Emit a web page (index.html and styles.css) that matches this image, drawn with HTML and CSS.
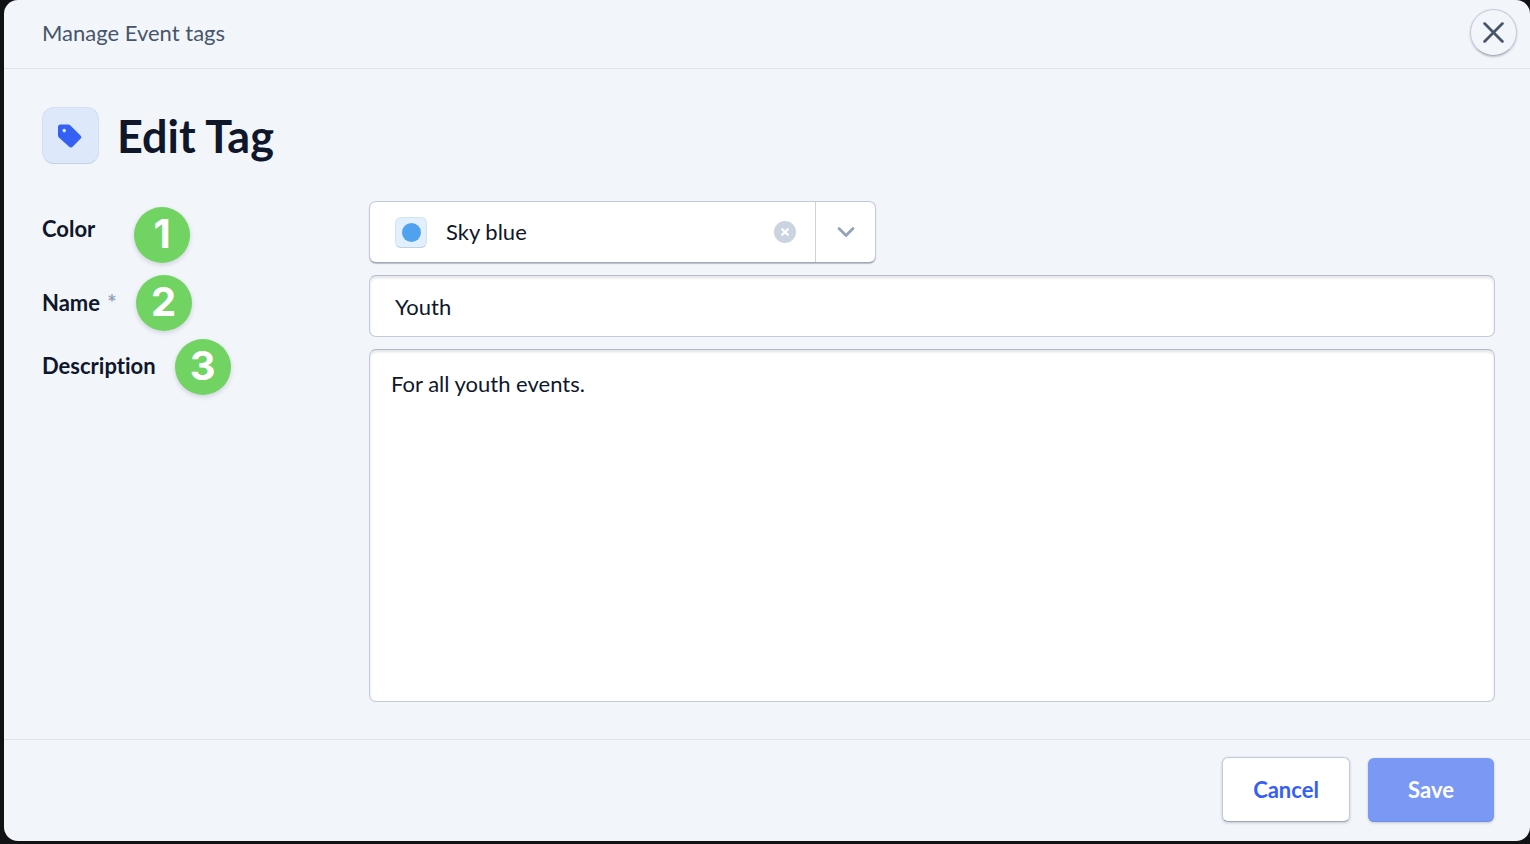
FILE: index.html
```html
<!DOCTYPE html>
<html lang="en">
<head>
    <meta charset="UTF-8">
    <meta name="viewport" content="width=device-width, initial-scale=1">
    <title>Edit Tag</title>
    <link rel="stylesheet" href="styles.css">
</head>
<body>
    <form class="modal">
        <header class="modal-header">
            <span class="modal-name">Manage Event tags</span>
            <button type="button" class="close" aria-label="Close">
                <svg width="21" height="21" viewBox="0 0 20 20" fill="none" stroke="#475569" stroke-width="2.6" stroke-linecap="round">
                    <path d="M1.5 1.5l17 17M18.5 1.5l-17 17"/>
                </svg>
            </button>
        </header>

        <main class="modal-body">
            <div class="title">
                <span class="title-icon">
                    <svg width="24" height="24" viewBox="0 0 24 24">
                        <path fill="#3560f4" fill-rule="evenodd" d="M2.500 .5h7.700c.8 0 1.600.3 2.200.9L22.200 11.200a2.600 2.600 0 0 1 0 3.900L14.900 22.600a2.800 2.800 0 0 1-4 0L.9 13.500A2.900 2.900 0 0 1 0 11.300V3A2.500 2.500 0 0 1 2.500 .5zM6.200 4.800a1.800 1.800 0 1 0 0 3.600 1.800 1.800 0 0 0 0-3.600z"/>
                    </svg>
                </span>
                <h1>Edit Tag</h1>
            </div>

            <div class="row">
                <div class="label-cell step-low">
                    <label for="color">Color</label>
                    <span class="step">1</span>
                </div>
                <div class="select-box">
                    <span class="swatch"></span>
                    <select id="color">
                        <option>Sky blue</option>
                    </select>
                    <button type="button" class="clear" aria-label="Clear color">
                        <svg width="22" height="22" viewBox="0 0 22 22">
                            <circle cx="11" cy="11" r="11" fill="#cbd3e0"/>
                            <path d="M8.200 8.200l5.600 5.600M13.800 8.200l-5.600 5.600" stroke="#fff" stroke-width="2.200" stroke-linecap="round"/>
                        </svg>
                    </button>
                    <button type="button" class="toggle" aria-label="Show colors">
                        <svg width="18" height="12" viewBox="0 0 18 12" fill="none" stroke="#94a3b8" stroke-width="2.800" stroke-linecap="round" stroke-linejoin="round">
                            <path d="M2 2.500l7 7 7-7"/>
                        </svg>
                    </button>
                </div>
            </div>

            <div class="row">
                <div class="label-cell">
                    <label for="name">Name <span class="required">*</span></label>
                    <span class="step">2</span>
                </div>
                <input type="text" id="name" class="field" value="Youth">
            </div>

            <div class="row row-grow">
                <div class="label-cell label-short">
                    <label for="description">Description</label>
                    <span class="step">3</span>
                </div>
                <textarea id="description" class="field">For all youth events.</textarea>
            </div>
        </main>

        <footer class="modal-footer">
            <button type="button" class="btn btn-cancel">Cancel</button>
            <button type="submit" class="btn btn-save">Save</button>
        </footer>
    </form>
</body>
</html>
```
FILE: styles.css
```css
* {
    box-sizing: border-box;
}

body {
    margin: 0;
    background: #111214;
    color: #0f172a;
    font-family: Lato, "Liberation Sans", sans-serif;
    font-size: 22px;
    line-height: 28px;
    font-variant-ligatures: none;
}

button, input, select, textarea {
    font: inherit;
    color: inherit;
}

button {
    padding: 0;
    border: 0;
    background: none;
    cursor: pointer;
}

svg {
    display: block;
}

.modal {
    display: flex;
    flex-direction: column;
    min-height: calc(100vh - 3px);
    margin: 0 0 3px 4px;
    background: #f2f5fa;
    border-radius: 14px;
}

.modal-header {
    display: flex;
    align-items: center;
    justify-content: space-between;
    padding: 9px 13px 12px 38px;
    border-bottom: 1px solid #dfe4ec;
}

.modal-name {
    color: #475569;
}

.close {
    display: flex;
    align-items: center;
    justify-content: center;
    width: 47px;
    height: 47px;
    border: 1px solid #c4cad8;
    border-bottom-color: #a3a9b7;
    border-radius: 50%;
    box-shadow: 0 1px 2px rgba(15, 23, 42, 0.25);
}

.modal-body {
    flex: 1;
    display: flex;
    flex-direction: column;
    gap: 12px;
    padding: 38px 35px 37px 38px;
}

.title {
    display: flex;
    align-items: center;
    gap: 18px;
    margin-bottom: 25px;
}

.title-icon {
    display: flex;
    align-items: center;
    justify-content: center;
    width: 57px;
    height: 57px;
    padding-right: 2px;
    background: #dde8fa;
    border: 1px solid #d3dff2;
    border-bottom-color: #c4d0e4;
    border-radius: 12px;
}

h1 {
    margin: 0;
    font-size: 45px;
    line-height: 56px;
}

.row {
    display: flex;
}

.row-grow {
    flex: 1;
}

.label-cell {
    display: flex;
    flex: 0 0 327px;
    align-items: flex-start;
    gap: 19px;
}

.label-cell label {
    min-width: 73px;
    font-weight: bold;
    line-height: 56px;
}

.required {
    margin-left: 2px;
    color: #94a3b8;
}

/* numbered markers beside the labels */
.step {
    width: 56px;
    height: 56px;
    border-radius: 50%;
    background: #71d362;
    box-shadow: 0 2px 5px rgba(15, 23, 42, 0.15);
    color: #fff;
    font: bold 40px/54px Inter, sans-serif;
    text-align: center;
}

.step-low .step {
    align-self: flex-end;
}

.label-short label {
    line-height: 34px;
}

.label-short .step {
    margin-top: -10px;
}

.select-box {
    display: flex;
    align-items: center;
    width: 507px;
    height: 62px;
    padding-left: 25px;
    background: #fff;
    border: 1px solid #c3cad7;
    border-bottom-color: #a0a7b5;
    border-radius: 7px;
    box-shadow: 0 1px 1px rgba(15, 23, 42, 0.25);
}

.swatch {
    display: flex;
    align-items: center;
    justify-content: center;
    width: 32px;
    height: 31px;
    background: #e1f0fc;
    border: 1px solid #d3e3f0;
    border-bottom-color: #c0d0de;
    border-radius: 6px;
}

.swatch::before {
    content: "";
    width: 19px;
    height: 19px;
    border-radius: 50%;
    background: #50a2ee;
}

.select-box select {
    flex: 1;
    min-width: 0;
    height: 40px;
    padding: 0 19px;
    border: 0;
    background: none;
    appearance: none;
}

.clear {
    margin-right: 19px;
}

.toggle {
    display: flex;
    align-items: center;
    justify-content: center;
    align-self: stretch;
    width: 60px;
    border-left: 1px solid #cbd3e0;
}

.field {
    flex: 1;
    min-width: 0;
    height: 62px;
    padding: 0 25px;
    background: #fff;
    border: 1px solid #c3cad7;
    border-top-color: #b3bac8;
    border-radius: 7px;
    box-shadow: inset 0 2px 3px rgba(15, 23, 42, 0.12);
}

textarea.field {
    height: auto;
    min-height: 200px;
    padding: 20px 21px;
    resize: none;
}

.modal-footer {
    display: flex;
    align-items: flex-end;
    justify-content: flex-end;
    gap: 18px;
    padding: 17px 36px 19px;
    border-top: 1px solid #dfe4ec;
}

.btn {
    border-radius: 6px;
    font-weight: bold;
    box-shadow: 0 1px 3px rgba(15, 23, 42, 0.2);
}

.btn-cancel {
    width: 128px;
    height: 65px;
    background: #fff;
    border: 1px solid #c3cad7;
    border-bottom-color: #a0a7b5;
    color: #3560f4;
}

.btn-save {
    width: 126px;
    height: 64px;
    background: #7999f5;
    border-bottom: 1px solid #6f8de2;
    color: #fff;
}
```
